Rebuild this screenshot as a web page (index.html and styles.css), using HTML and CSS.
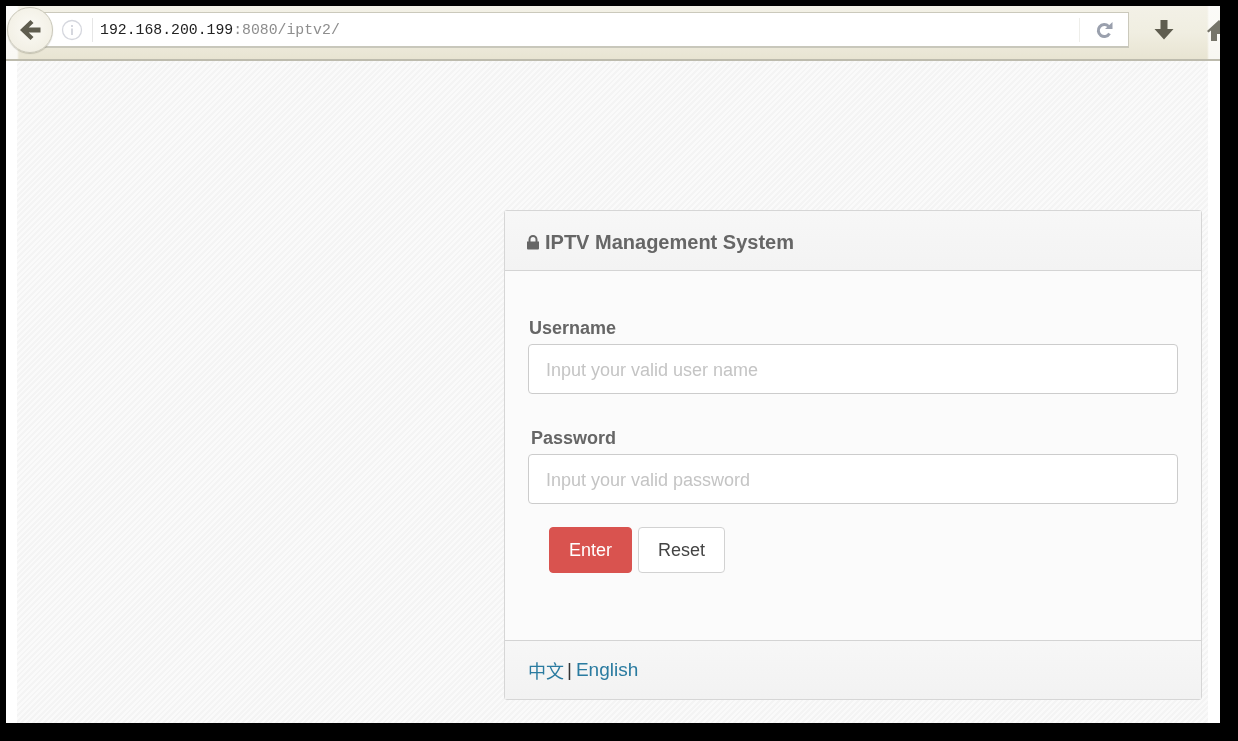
FILE: index.html
```html
<!DOCTYPE html>
<html lang="en">
<head>
<meta charset="utf-8">
<title>IPTV Management System</title>
<link rel="stylesheet" href="styles.css">
</head>
<body>
<div class="window">
  <header class="toolbar">
    <button class="back" type="button" aria-label="Back">
      <svg width="24" height="24" viewBox="0 0 24 24"><path d="M12.500 2 2 12l10.500 10 3-3-4.800-4.500H22.500v-5H10.700L15.500 5z" fill="#5f5d4f"/></svg>
    </button>
    <div class="address">
      <svg class="info" width="22" height="22" viewBox="0 0 22 22"><circle cx="11" cy="11" r="9.500" fill="none" stroke="#d5d7de" stroke-width="1.300"/><rect x="10" y="9.500" width="2" height="6.500" fill="#d5d7de"/><rect x="10" y="6" width="2" height="2" fill="#d5d7de"/></svg>
      <div class="url"><span class="host">192.168.200.199</span><span class="path">:8080/iptv2/</span></div>
      <div class="reload">
        <svg width="20" height="20" viewBox="0 0 20 20"><path d="M14.500 6.200A6 6 0 1 0 15.500 13.500" fill="none" stroke="#9aa0ad" stroke-width="3"/><path d="M11 9h7.500V2z" fill="#9aa0ad"/></svg>
      </div>
    </div>
    <div class="tools">
      <svg width="24" height="24" viewBox="0 0 24 24"><path d="M8.500 2h7v9h6L12 21.500 2.500 11h6z" fill="#5f5d4f"/></svg>
      <svg class="home" width="24" height="24" viewBox="0 0 24 24"><path d="M12 2 0 13l1.500 1.500L4 12.500V23h6v-7h4v7h6V12.500l2.500 2L24 13z" fill="#76756a"/></svg>
    </div>
  </header>
  <main class="page">
    <section class="panel">
      <div class="panel-head">
        <h1 class="title">
          <svg class="lock" width="14" height="15" viewBox="0 0 14 15"><path d="M3.500 7V4.500a3.500 3.500 0 0 1 7 0V7" fill="none" stroke="#666" stroke-width="2"/><path d="M1 6.500h12v7a1 1 0 0 1-1 1H2a1 1 0 0 1-1-1z" fill="#666"/></svg>
          IPTV Management System
        </h1>
      </div>
      <form class="panel-body">
        <div class="field">
          <label class="label" for="user">Username</label>
          <input class="input" id="user" type="text" placeholder="Input your valid user name">
        </div>
        <div class="field field-second">
          <label class="label label-offset" for="pass">Password</label>
          <input class="input" id="pass" type="password" placeholder="Input your valid password">
        </div>
        <div class="actions">
          <button class="btn btn-danger" type="button">Enter</button>
          <button class="btn btn-default" type="button">Reset</button>
        </div>
      </form>
      <div class="panel-foot"><a class="lang lang-cn" href="#">中文</a> <span class="sep">|</span> <a class="lang" href="#">English</a></div>
    </section>
  </main>
</div>
</body>
</html>
```
FILE: styles.css
```css
* { box-sizing: border-box; }
html, body { margin: 0; height: 100%; }
body {
  background: #000;
  padding: 6px 18px 18px 6px;
  overflow: hidden;
  font-family: "Liberation Sans", Arial, sans-serif;
}
.window {
  position: relative;
  height: 717px;
  display: flex;
  flex-direction: column;
  overflow: hidden;
  background: #fff;
  filter: blur(0.45px);
}
.toolbar {
  flex: 0 0 55px;
  display: flex;
  align-items: flex-start;
  padding: 6px 0 0 24px;
  border-bottom: 2px solid #bdbbad;
  background:
    linear-gradient(90deg, rgba(255,255,255,.75) 0, rgba(255,255,255,.75) 11px, rgba(255,255,255,0) 13px, rgba(255,255,255,0) calc(100% - 13px), rgba(255,255,255,.7) calc(100% - 11px)),
    linear-gradient(180deg, #f3f1e7 0, #f0eee1 50%, #e8e4d2 100%);
}
.back {
  position: absolute;
  left: 1px;
  top: 1px;
  width: 46px;
  height: 46px;
  padding: 0;
  display: flex;
  align-items: center;
  justify-content: center;
  border: 1.5px solid #c9c7b9;
  border-radius: 50%;
  background: radial-gradient(circle at 50% 45%, #fbfaf5, #efecdf);
  box-shadow: 0 1px 1px rgba(120,118,100,.35);
  z-index: 1;
}
.address {
  flex: 0 0 1099px;
  height: 36px;
  display: flex;
  align-items: center;
  padding-left: 30px;
  background: #fff;
  border: 1px solid #cbc9bc;
  border-bottom: 2px solid #c8c7bb;
}
.info { flex: none; margin-right: 9px; }
.url {
  flex: 1;
  height: 24px;
  line-height: 24px;
  padding-left: 7px;
  border-left: 1px solid #e6e6e6;
  font-family: "Liberation Mono", monospace;
  font-size: 14.8px;
  white-space: nowrap;
}
.host { color: #222; }
.path { color: #8d8d8d; }
.reload {
  flex: 0 0 49px;
  height: 24px;
  display: flex;
  align-items: center;
  justify-content: center;
  border-left: 1px solid #eeeeea;
}
.tools {
  flex: none;
  display: flex;
  gap: 31px;
  margin-left: 23px;
  padding-top: 6px;
}
.tools svg { flex: none; }
.page {
  flex: 1;
  display: flex;
  justify-content: flex-end;
  padding: 149px 18px 0 0;
  background:
    linear-gradient(90deg, #fff 0, #fff 11px, transparent 11px, transparent calc(100% - 12px), #fff calc(100% - 12px)),
    repeating-linear-gradient(135deg, #fafafa 0, #fafafa 2px, #f4f4f4 2px, #f4f4f4 4px);
}
.panel {
  width: 698px;
  height: 490px;
  display: flex;
  flex-direction: column;
  background: #fbfbfb;
  border: 1px solid #d6d6d6;
  border-radius: 3px;
}
.panel-head {
  flex: 0 0 60px;
  display: flex;
  align-items: center;
  padding: 4px 21px 0;
  background: linear-gradient(180deg, #f7f7f7, #f3f3f3);
  border-bottom: 1px solid #d4d4d4;
}
.title {
  margin: 0;
  display: flex;
  align-items: center;
  gap: 5px;
  font-size: 20px;
  font-weight: 700;
  color: #666;
}
.lock { flex: none; }
.panel-body {
  flex: 1;
  padding: 45px 23px 0;
}
.field-second { margin-top: 33px; }
.label {
  display: block;
  height: 28px;
  line-height: 24px;
  font-size: 18px;
  font-weight: 700;
  color: #666;
  margin-left: 1px;
}
.label-offset { margin-left: 3px; }
.input {
  display: block;
  width: 100%;
  height: 50px;
  padding: 3px 17px 0;
  border: 1px solid #ccc;
  border-radius: 4px;
  background: #fff;
  font-family: inherit;
  font-size: 18px;
  outline: none;
}
.input::placeholder { color: #c4c4c4; opacity: 1; }
.actions {
  display: flex;
  gap: 6px;
  margin: 23px 0 0 21px;
}
.field-second { margin-top: 32px; }
.btn {
  height: 46px;
  padding: 0 19px;
  border-radius: 4px;
  font-family: inherit;
  font-size: 18px;
}
.btn-danger { color: #fff; background: #d9534f; border: 1px solid #d9534f; }
.btn-default { color: #444; background: #fff; border: 1px solid #d2d2d2; }
.panel-foot {
  flex: 0 0 59px;
  display: flex;
  align-items: center;
  gap: 3px;
  padding: 0 23px;
  background: linear-gradient(180deg, #f7f7f7, #f2f2f2);
  border-top: 1px solid #d4d4d4;
  font-size: 19px;
  font-family: "Liberation Sans", "Noto Sans CJK SC", sans-serif;
  color: #333;
}
.lang { color: #2a7ba0; text-decoration: none; }
.lang-cn { font-size: 18px; }
.sep { color: #333; margin-right: 1px; }
```
